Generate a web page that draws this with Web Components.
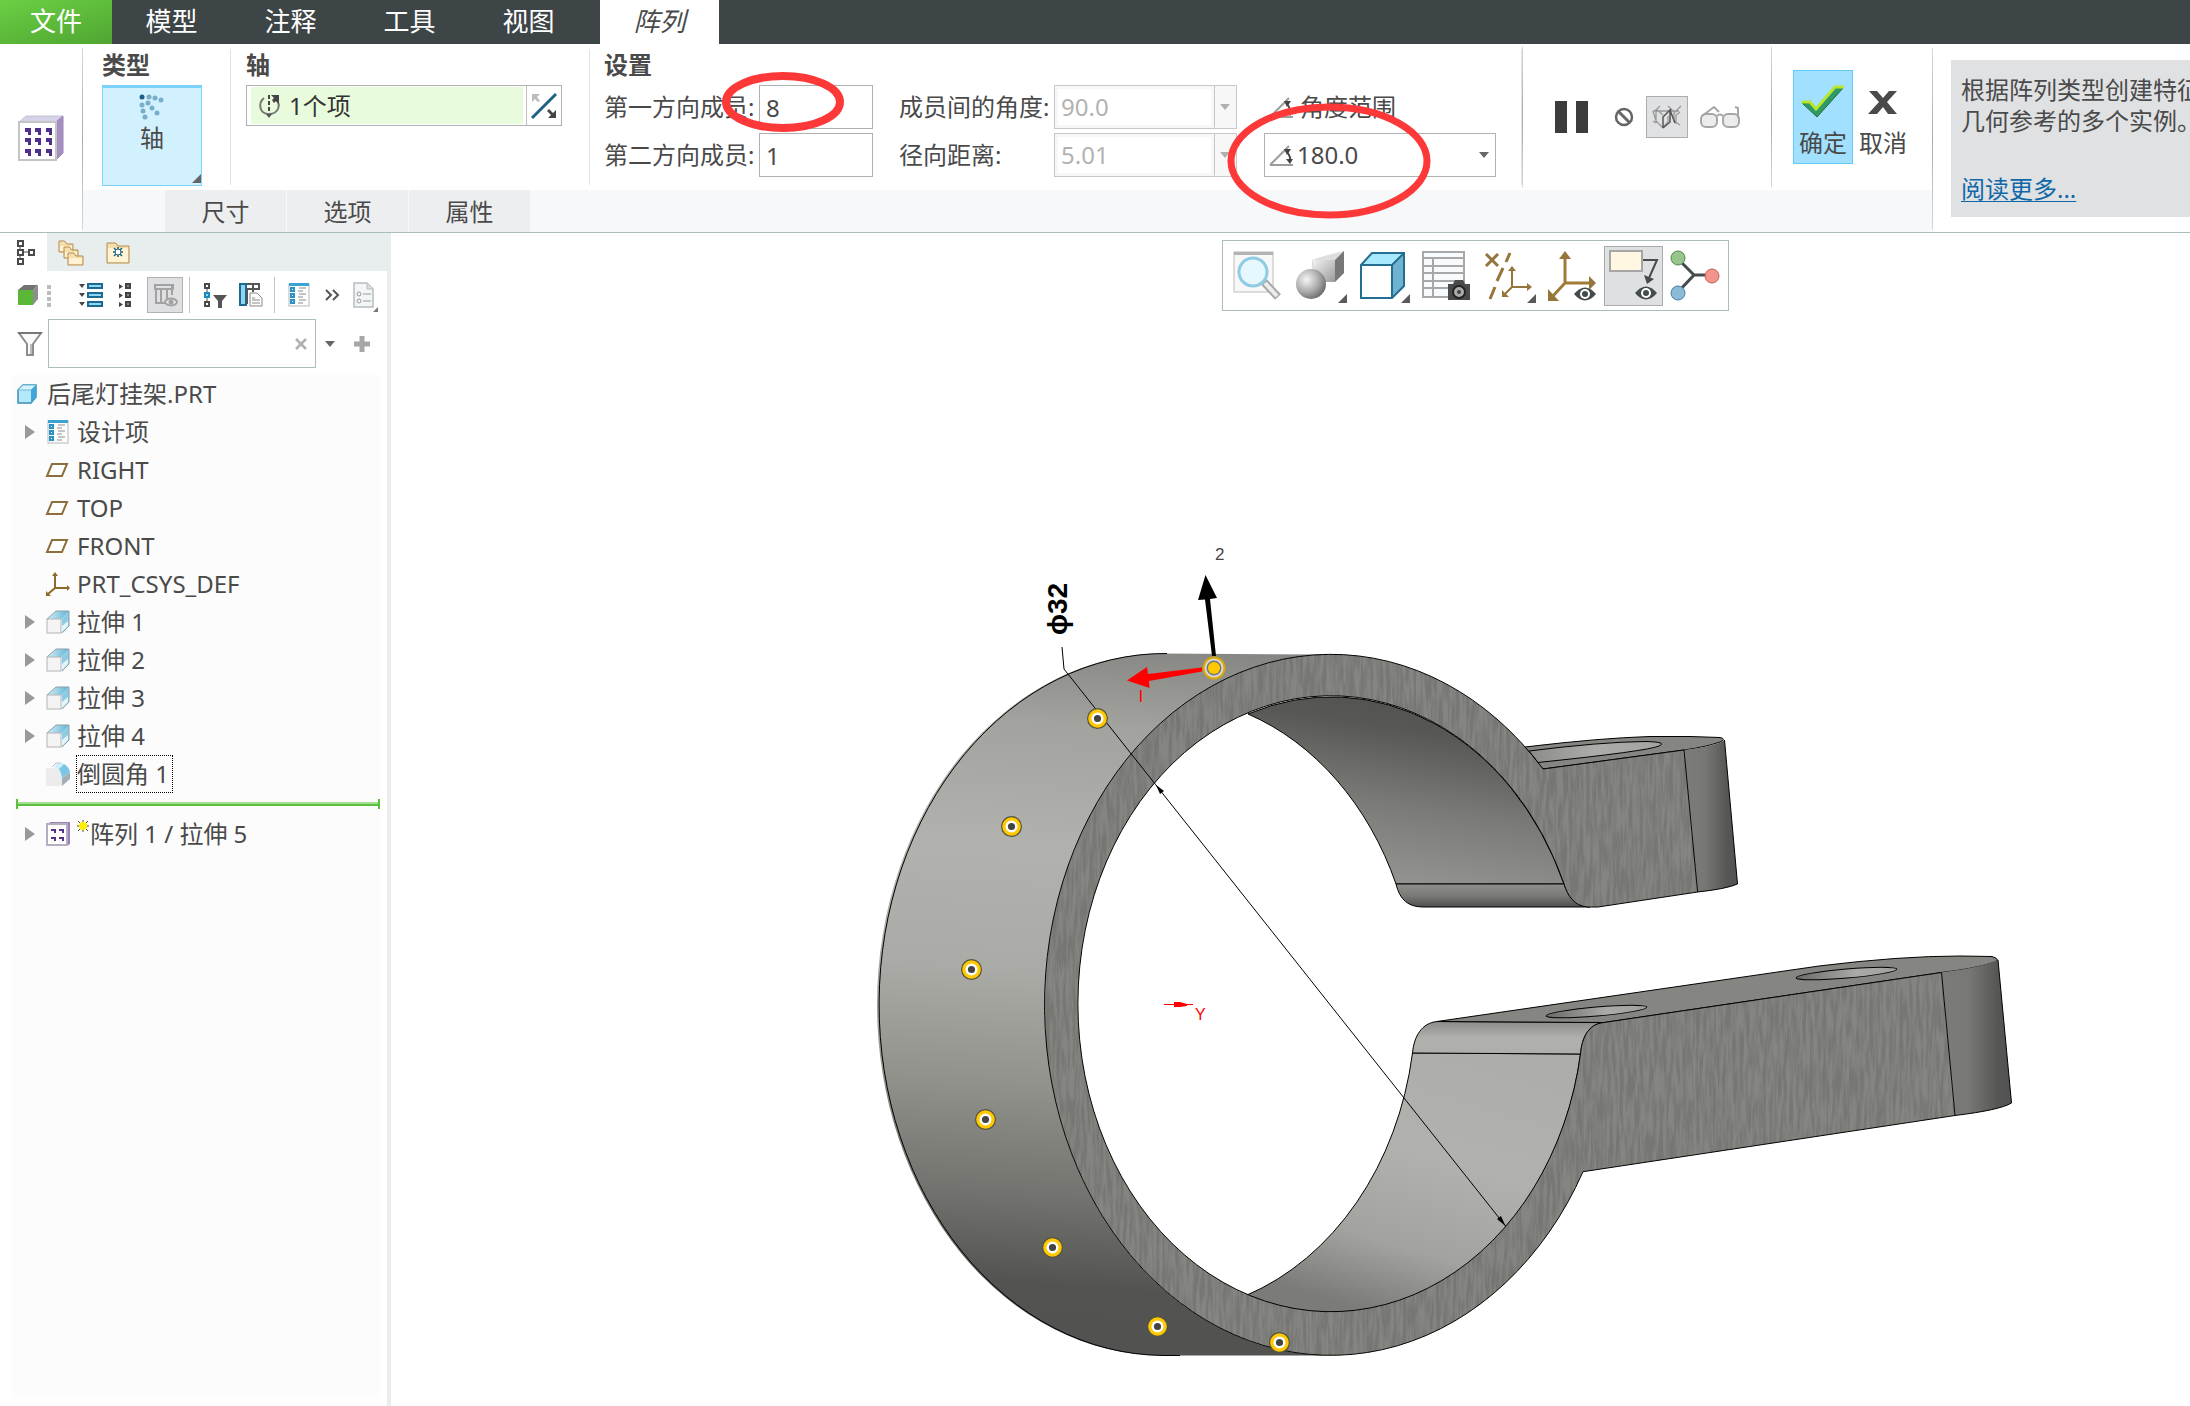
<!DOCTYPE html>
<html lang="zh-CN">
<head>
<meta charset="utf-8">
<meta name="viewport" content="width=device-width, initial-scale=1">
<title>后尾灯挂架.PRT</title>
<style>
  html, body { margin: 0; height: 100%; }
  body {
    font-family: "Noto Sans", "Noto Sans CJK SC", sans-serif;
    font-size: 24px; line-height: 36px; color: #4a4a4a; background: #fff;
  }
</style>
</head>
<body>
<cad-app></cad-app>
<script>
const BASE = `<style>
  *, *::before, *::after { box-sizing: border-box; }
  :host { display: block; }
  button, input, select { font: inherit; color: inherit; margin: 0; }
  button { background: none; border: 0; padding: 0; }
  svg { display: block; flex: none; }
</style>`;

function define(name, html, setup) {
  const tpl = document.createElement('template');
  tpl.innerHTML = BASE + html;
  customElements.define(name, class extends HTMLElement {
    constructor() { super(); this.attachShadow({ mode: 'open' }).append(tpl.content.cloneNode(true)); }
    connectedCallback() { if (setup) setup(this, this.shadowRoot); }
  });
}

/* Icon set: [width, height, markup] */
const cube = `<defs><linearGradient id="t" x2="1" y2="0"><stop offset="0" stop-color="#d5edf6"/><stop offset="1" stop-color="#5fb4d6"/></linearGradient></defs><path d="M1 9 10 1h13l-7 8z" fill="url(#t)"/><path d="M16 9l7-8v15l-7 7z" fill="#8ccbe4"/><path d="M16 22v-6l6-5v5z" fill="#e2f5fc"/><path d="M1 9 10 1h13v15l-7 7" fill="none" stroke="#8fa0a6"/><rect x="1" y="9" width="14" height="14" fill="#f4f4f4" stroke="#b4b4b4"/>`;
const sheet = `<rect x="2" y="1" width="20" height="22" fill="#fdfdfd" stroke="#b4b8ba"/><rect x="2" y="0" width="20" height="3" fill="#3aa3d2"/><g fill="#fff" stroke="#2a93c6" stroke-width="2"><rect x="4" y="5" width="3" height="3"/><rect x="4" y="11" width="3" height="3"/><rect x="4" y="17" width="3" height="3"/></g><path d="M12 5h7M11 8h5M12 11h7M11 14h5M12 17h7M11 20h5" stroke="#8c8c8c" fill="none"/>`;
const angle = `<path d="M1 22 20 3M1 22h23" stroke="#9c9c9c" stroke-width="2" fill="none"/><path d="M18 9q4 5 3 9" stroke="#444" stroke-width="2" fill="none"/><path d="M15 6l7 0-4 6zM17 16h7l-3 5z" fill="#444"/>`;
const corner = (x, y) => `<path d="M${x} ${y}v-9l-9 9z" fill="#5a5a5a"/>`;
const eye = (x, y) => `<g transform="translate(${x} ${y})"><path d="M-11 0Q0-13 11 0Q0 13-11 0Z" fill="#434b4c"/><circle r="5" fill="#fff"/><circle r="3" fill="#434b4c"/></g>`;
const folder = (x, y, w, h) => `<path d="M${x} ${y}h${w * .4}l2 3h${w * .6 - 2}v${h}h-${w}z" fill="#f6dfae" stroke="#b58d4c"/><path d="M${x + 1} ${y + 5}h${w - 2}v${h - 3}h-${w - 2}z" fill="#fff3d4"/>`;
const dotL = (x, y) => `M${x} ${y}h6v7h-3v-3h-3z`;
const ICONS = {
  pattern: [46, 46, `<path d="M1 7 8 1h37l-6 6z" fill="#d5d2ea" stroke="#c4c4cc"/><path d="M38 7l7-6v37l-7 7z" fill="#a68fc0" stroke="#9c86b8"/><rect x="1" y="7" width="37" height="38" fill="#fff" stroke="#c4c4c4" stroke-width="2"/><path d="${[13, 23, 34].map(y => [7, 17, 28].map(x => dotL(x, y)).join('')).join('')}" fill="#4f2f8c"/>`],
  axisdots: [26, 26, `<g fill="#78aec8"><circle cx="10" cy="3" r="2.5"/><circle cx="16" cy="4" r="2.5"/><circle cx="22" cy="6" r="2.5"/><circle cx="3" cy="11" r="2.5"/><circle cx="9" cy="9" r="2.5"/><circle cx="13" cy="14" r="2.5"/><circle cx="18" cy="19" r="2.5"/><circle cx="4" cy="17" r="2.5"/><circle cx="6" cy="23" r="2.5"/></g><circle cx="3" cy="3" r="2.5" fill="#1b5f88"/>`],
  rotate: [22, 24, `<path d="M5 4C-1 9 0 20 10 20C20 20 22 10 17 6" fill="none" stroke="#777" stroke-width="2"/><path d="M12 1h8v9l-3-3-2 2-2-3 2-2z" fill="#444"/><path d="M10 1v18" stroke="#444" stroke-width="2" stroke-dasharray="4 2"/><path d="M7 20h6l-3 4z" fill="#555"/>`],
  flip: [26, 26, `<path d="M1 25 25 1" stroke="#1f6285" stroke-width="3"/><path d="M1 1h8L6 4l3 4-2 1-3-3-3 3z" fill="#bcbcbc"/><path d="M25 25h-8l3-3-4-4 2-2 4 4 3-3z" fill="#444"/>`],
  angle: [26, 24, angle],
  caret: [10, 6, `<path d="M0 0h10L5 6z" fill="currentColor"/>`],
  pause: [34, 34, `<rect x="0" y="1" width="12" height="32" fill="#3c3c3c"/><rect x="21" y="1" width="12" height="32" fill="#3c3c3c"/>`],
  none: [20, 20, `<circle cx="10" cy="10" r="8" fill="none" stroke="#666" stroke-width="2.5"/><path d="M5 5 15 15" stroke="#666" stroke-width="3"/>`],
  wire: [30, 26, `<g fill="none" stroke="#999" stroke-width="1.3"><path d="M1 7h26M1 7 4 17 11 24M1 17 4 19M4 5v14M11 11 4 5M8 2 3 7M16 12v6l-6 6M22 9v8l6 4M28 8l-4 3v9M16 2l6 6M29 2 22 9"/></g><path d="M11 24V13L19 5M11 24l7-6V6l5 13" fill="none" stroke="#555" stroke-width="1.5"/>`],
  glasses: [40, 24, `<g fill="#ececec" stroke="#a6a6a6" stroke-width="2"><rect x="1" y="9" width="16" height="13" rx="5"/><rect x="23" y="9" width="16" height="13" rx="5"/></g><path d="M17 11q3-3 6 0M2 11 14 2l5 5M38 13V3l-3-1" fill="none" stroke="#a6a6a6" stroke-width="2"/>`],
  check: [44, 32, `<path d="M1 17h8l6 6L34 1h9L16 31z" fill="#2e9a66" stroke="#2b6a3e"/><path d="M1 16h8l6 7L34 1h9" fill="none" stroke="#b7e62a" stroke-width="3"/>`],
  cross: [30, 24, `<path d="M1 0h8l6 7 6-7h8L19 11l10 12h-9l-5-7-6 7H0L11 11z" fill="#4a4a4a"/>`],
  tree: [18, 26, `<g fill="none" stroke="#4a4a4a" stroke-width="2"><rect x="1" y="2" width="5" height="5"/><rect x="1" y="11" width="5" height="5"/><rect x="1" y="20" width="5" height="5"/><rect x="12" y="11" width="5" height="5"/><path d="M3 7v4M3 16v4M6 13h6" stroke-width="1"/></g>`],
  folders: [26, 26, folder(1, 2, 14, 8) + folder(6, 8, 14, 8) + folder(10, 14, 15, 9)],
  favfolder: [24, 24, folder(1, 3, 22, 17) + `<path d="M12 7v10M7 12h10M8 8l8 8M16 8l-8 8" stroke="#17617f" stroke-width="1.5"/><circle cx="12" cy="12" r="3" fill="#fff" stroke="#17617f"/>`],
  greencube: [20, 20, `<path d="M0 5 6 0h14l-5 5z" fill="#737373"/><path d="M15 5l5-5v14l-5 6z" fill="#8e8e8e"/><rect y="5" width="15" height="15" fill="#5ab738"/>`],
  dots: [4, 24, `<g fill="#bdbdbd"><rect y="2" width="4" height="4"/><rect y="8" width="4" height="4"/><rect y="14" width="4" height="4"/><rect y="20" width="4" height="4"/></g>`],
  expand: [24, 26, `<path d="M0 2h6L3 6zM0 11h6l-3 4zM0 20h6l-3 4z" fill="#444"/><g fill="#8fd6f4" stroke="#1b6a90" stroke-width="2"><rect x="9" y="2" width="14" height="4"/><rect x="9" y="11" width="14" height="4"/><rect x="9" y="20" width="14" height="4"/></g>`],
  collapse: [24, 26, `<path d="M6 2v5l4-2.500zM6 11v5l4-2.500zM6 20v5l4-2.500z" fill="#444"/><g fill="#888" stroke="#444" stroke-width="2"><rect x="13" y="2" width="4" height="4"/><rect x="13" y="11" width="4" height="4"/><rect x="13" y="20" width="4" height="4"/></g>`],
  coleye: [24, 26, `<g fill="none" stroke="#a2a2a2" stroke-width="2"><path d="M2 3h18v4H2zM3 7v14h5V7M8 7v14h6V7M14 7v6M19 3v10"/></g><ellipse cx="18" cy="20" rx="6" ry="3.500" fill="#e6e6e6" stroke="#a2a2a2" stroke-width="2"/><circle cx="18" cy="20" r="2.500" fill="#a2a2a2"/>`],
  treefilter: [24, 26, `<g fill="#fff" stroke="#4a4a4a" stroke-width="2"><rect x="2" y="2" width="4" height="4"/><rect x="2" y="20" width="4" height="4"/></g><rect x="2" y="11" width="4" height="4" fill="#8fd6f4" stroke="#1b8abf" stroke-width="2"/><path d="M4 6v4M4 16v4" stroke="#4a4a4a"/><path d="M10 13h14l-5 6v7h-4v-7z" fill="#555"/>`],
  colsheet: [24, 26, `<rect x="1" y="2" width="6" height="21" fill="#8fd6f4" stroke="#1b6a90" stroke-width="2"/><path d="M8 2h12v5H8M8 7v15M14 2v8" fill="none" stroke="#555" stroke-width="2"/><path d="M11 11h7l5 5v8H11z" fill="#fff" stroke="#888"/><path d="M13 16h3M13 18h8M13 21h8" stroke="#888"/>`],
  sheet: [24, 24, sheet],
  chevrons: [14, 12, `<path d="M1 1l5 5-5 5M8 1l5 5-5 5" fill="none" stroke="#555" stroke-width="2"/>`],
  doc: [24, 30, `<path d="M1 3h13l6 6v18H1z" fill="#f3f6f7" stroke="#b8bcbe" stroke-width="1.5"/><path d="M14 3v6h6" fill="#ddd" stroke="#b8bcbe"/><g fill="none" stroke="#999"><circle cx="6" cy="14" r="2"/><circle cx="6" cy="21" r="2"/><path d="M10 14h8M10 21h8"/></g><path d="M25 32v-5l-5 5z" fill="#777"/>`],
  funnel: [24, 24, `<path d="M1 1h22l-8 11v11H9V12z" fill="#fafafa" stroke="#8d8d8d" stroke-width="2"/><path d="M13 12v10" stroke="#bbb" stroke-width="2"/><path d="M0 1h24" stroke="#777" stroke-width="2"/>`],
  clear: [12, 12, `<path d="M1 1l10 10M11 1 1 11" stroke="#b0b0b0" stroke-width="2.500"/>`],
  plus: [18, 18, `<path d="M9 1v16M1 9h16" stroke="#a6a6a6" stroke-width="5"/>`],
  part: [20, 20, `<path d="M1 6 6 1h13v12l-5 6H1z" fill="#b4e8fb" stroke="#3a8db3" stroke-width="1.5"/><path d="M14 6l5-5v12l-5 6z" fill="#3fa7da"/><path d="M1 6 6 1h13l-5 5z" fill="#d6f3fd" stroke="#6bb5d3"/>`],
  arrow: [10, 14, `<path d="M0 0 10 7 0 14z" fill="#999"/>`],
  plane: [24, 24, `<path d="M6 6h15l-5 12H1z" fill="#fff" stroke="#8c6f3c" stroke-width="2"/>`],
  csys: [24, 24, `<path d="M9 16V3M9 16h13M9 16l-7 6" fill="none" stroke="#8c6b2a" stroke-width="2"/><path d="M6 4h6L9 0zM21 13v6l3-3zM0 19v5h5z" fill="#8c6b2a"/>`],
  extrude: [24, 24, cube],
  round: [24, 24, `<path d="M0 6h9q7 2 7 10v8H0z" fill="#ececec"/><path d="M16 16l8-6v7l-8 7z" fill="#a4b0b5"/><path d="M8 5 13 0q9 2 11 10l-8 6Q15 8 8 5z" fill="#cdeefb"/><path d="M13 7l5-5q5 3 6 8l-8 6q0-5-3-9z" fill="#7cc6e4"/><path d="M6 5l4-4h4" stroke="#b9c2c5" fill="none"/>`],
  patternsmall: [24, 24, `<path d="M2 2 4 0h20v22l-3 2z" fill="#9a82b8"/><rect x="1" y="2" width="20" height="21" fill="#fff" stroke="#b5aec0" stroke-width="2"/><path d="M5 7h5v4H8V9H5zM13 7h5v4h-2V9h-3zM5 15h5v4H8v-2H5zM13 15h5v4h-2v-2h-3z" fill="#53318c"/>`],
  star: [12, 12, `<path d="M1 1l10 10M11 1 1 11M6 0v12M0 6h12" stroke="#55552a"/><circle cx="6" cy="6" r="4" fill="#ffee00"/>`],
  refit: [48, 50, `<rect x="1" y="1" width="39" height="40" fill="#f8f8f8" stroke="#bcbcbc"/><rect x="1" y="1" width="39" height="3" fill="#b4b4b4"/><path d="M31 31l14 15" stroke="#a9a9a9" stroke-width="8"/><path d="M32 32l12 13" stroke="#eee" stroke-width="4"/><circle cx="20" cy="21" r="14" fill="#e6f8fe" stroke="#90cbe4" stroke-width="3"/>`],
  shade: [48, 50, `<defs><radialGradient id="g" cx=".35" cy=".35" r=".7"><stop offset="0" stop-color="#f6f6f6"/><stop offset=".6" stop-color="#aaa"/><stop offset="1" stop-color="#6b6b6b"/></radialGradient><linearGradient id="f" x2="1" y2="1"><stop offset="0" stop-color="#f2f2f2"/><stop offset="1" stop-color="#9a9a9a"/></linearGradient></defs><path d="M16 9 28 5 48 0v22l-9 9H16z" fill="#dedede"/><path d="M17 9h22v22H17z" fill="url(#f)"/><path d="M39 9 48 0v22l-9 9z" fill="#777"/><circle cx="15" cy="33" r="15" fill="url(#g)"/>` + corner(51, 52)],
  display: [48, 50, `<path d="M2 14 13 2h32L33 14z" fill="#a9e9fd"/><path d="M33 14 45 2v33L33 47z" fill="#6fb3d1"/><path d="M2 14h31v33H2z" fill="#fff"/><path d="M2 14 13 2h32v33L33 47H2zM2 14h31v33M33 14 45 2" fill="none" stroke="#246f91" stroke-width="2"/>` + corner(51, 52)],
  views: [48, 50, `<rect x="1" y="1" width="41" height="45" fill="#f7fbfd" stroke="#a8a8a8" stroke-width="2"/><path d="M1 7h41M1 15h41M1 22h41M1 30h41M1 37h41M11 7v39" stroke="#a8a8a8" stroke-width="2"/><path d="M26 33h5l2-4h8l2 4h5v16H26z" fill="#4a4a4a"/><circle cx="37" cy="41" r="6" fill="#aaa" stroke="#222" stroke-width="2"/><circle cx="37" cy="41" r="2" fill="#444"/>`],
  datum: [48, 50, `<g fill="none" stroke="#94763c" stroke-width="3"><path d="M1 3l12 12M13 3 1 15M25 2l-4 9M18 17l-6 13M10 36 5 48"/><path d="M27 36V19M27 36h18M27 36l-8 8" stroke-width="2"/></g><path d="M23 20h8l-4-5zM42 32v8l5-4zM17 39v7h7z" fill="#94763c"/>` + corner(51, 52)],
  csyseye: [48, 50, `<path d="M17 32V6M17 32h26M17 32 4 46" stroke="#a07b35" stroke-width="3" fill="none"/><path d="M11 8h12l-6-8zM41 25v14l7-7zM0 38v12h11z" fill="#94763c"/>` + eye(37, 43)],
  note: [48, 52, `<rect x="0" y="1" width="32" height="20" fill="#fff7e2" stroke="#a6a6a6" stroke-width="2"/><path d="M33 10h14l-8 18" fill="none" stroke="#4a4a4a" stroke-width="2"/><path d="M34 25l10 4-7 5z" fill="#4a4a4a"/>` + eye(36, 43)],
  spin: [48, 50, `<path d="M7 8 23 24 7 41M23 24h18" fill="none" stroke="#434b4c" stroke-width="3"/><circle cx="7" cy="7" r="7" fill="#97c58b" stroke="#4f8a4d"/><circle cx="7" cy="42" r="7" fill="#8bbbd8" stroke="#477f9d"/><circle cx="41" cy="25" r="7" fill="#f2948c" stroke="#c1605a"/>`]
};
customElements.define('cad-icon', class extends HTMLElement {
  constructor() { super(); this.attachShadow({ mode: 'open' }); }
  connectedCallback() {
    const [w, h, body] = ICONS[this.getAttribute('name')];
    this.shadowRoot.innerHTML = `<style>:host{display:block;flex:none}svg{display:block;overflow:visible}</style>
      <svg width="${w}" height="${h}" viewBox="0 0 ${w} ${h}" aria-hidden="true">${body}</svg>`;
  }
});

define('cad-menu', `<style>
  nav { display: flex; height: 44px; background: #3d4547; }
  button { width: 119px; padding-bottom: 2px; font-size: 26px; line-height: 40px; color: #fff; text-align: center; }
  .file { width: 112px; background: linear-gradient(165deg, #6bcf43, #4fa632); }
  .active { margin-left: 12px; background: #fff; color: #4a4a4a; font-style: italic; }
</style>
<nav><button class="file">文件</button><button>模型</button><button>注释</button><button>工具</button><button>视图</button><button class="active">阵列</button></nav>`);

define('ribbon-group', `<style>
  :host { padding: 3px var(--pr, 0) 0 var(--pl, 0); border-right: 1px solid transparent; border-image: linear-gradient(#fff 4%, #e2e4e4 4%, #e2e4e4 96%, #fff 96%) 1; }
  h2 { margin: 0 0 2px; font-size: 24px; line-height: 36px; font-weight: 700; }
</style><h2></h2><slot></slot>`, (el, root) => { root.querySelector('h2').textContent = el.getAttribute('heading'); });

/* Drop-down whose caret sits over the native select */
define('value-combo', `<style>
  :host { display: grid; grid-template-columns: minmax(0, 1fr) 22px; height: 44px; border: 1px solid #b0b0b0; background: #fff; }
  select { grid-area: 1 / 1 / 2 / 3; appearance: none; border: 0; background: none; padding: 0 6px; width: 100%; height: 42px; opacity: 1; }
  cad-icon { grid-area: 1 / 2; place-self: center; pointer-events: none; color: #666; }
  :host([icon]) select { padding-left: 32px; }
  .lead { display: none; grid-area: 1 / 1; justify-self: start; align-self: center; padding-left: 4px; }
  :host([icon]) .lead { display: block; }
  :host([off]) { background: #f7f7f7; border-color: #c8c8c8; }
  :host([off]) select { color: #b2b2b2; }
  :host([off]) .pane { grid-area: 1 / 1; margin: 3px; background: #fff; }
  :host([off]) cad-icon { color: #b0b0b0; }
  :host([off]) .rule { grid-area: 1 / 2; border-left: 1px solid #c8c8c8; }
</style><span class="pane"></span><span class="rule"></span><select><option></option></select><cad-icon class="lead" name="angle"></cad-icon><cad-icon name="caret"></cad-icon>`,
(el, root) => {
  const s = root.querySelector('select');
  s.options[0].textContent = el.getAttribute('value');
  s.setAttribute('aria-label', el.getAttribute('label'));
  s.disabled = el.hasAttribute('off');
});

define('cad-ribbon', `<style>
  :host { display: flex; height: 189px; border-bottom: 1px solid #abbcbc; background: #fff; overflow: hidden; }
  .home { flex: none; width: 83px; display: grid; place-items: center; }
  .home, .main { border-right: 1px solid; border-image: linear-gradient(#fff 2%, #d4d9d9 3%, #9fafaf 50%, #d4d9d9 98%, #fff 99%) 1; }
  .main { flex: none; display: flex; flex-direction: column; }
  .groups { display: flex; height: 146px; }
  .g1 { --pl: 19px; --pr: 28px; } .g2 { --pl: 15px; --pr: 27px; } .g3 { --pl: 14px; --pr: 25px; }
  .type { display: flex; flex-direction: column; align-items: center; position: relative; width: 100px; height: 101px; padding-top: 6px; background: #d2f1ff; border: 1px solid #7dd2fb; border-top-width: 3px; }
  .type svg { position: absolute; right: 0; bottom: 2px; }
  .collector { display: flex; width: 316px; height: 41px; border: 1px solid #b0b0b0; }
  .items { flex: 1; display: flex; align-items: center; gap: 8px; margin: 1px 3px 1px 4px; padding-left: 8px; background: #e9fbdd; color: #333; text-align: left; }
  .flip { width: 35px; display: grid; place-items: center; border-left: 1px solid #c0c0c0; }
  .grid { display: grid; grid-template-columns: 155px 140px 155px 210px 232px; grid-template-rows: 44px 44px; row-gap: 4px; align-items: center; }
  .num { position: relative; width: 114px; height: 44px; }
  .num input { width: 100%; height: 100%; border: 1px solid #b0b0b0; padding: 0 6px; background: #fff; outline: 0; }
  .grid value-combo { width: 183px; }
  .grid .range { position: relative; }
  .grid .range value-combo { width: 232px; }
  .check { display: flex; align-items: center; gap: 5px; padding-left: 5px; }
  .ink { position: absolute; pointer-events: none; overflow: visible; z-index: 2; }
  .num .ink { left: -37px; top: -13px; }
  .range .ink { left: -37px; top: -30px; }
  .tools, .end { display: flex; align-items: center; }
  .tools { gap: 12px; padding: 0 31px 0 32px; border-right: 1px solid; border-left: 1px solid; border-image: linear-gradient(#fff 2%, #d4d9d9 3%, #aaa 50%, #d4d9d9 97%, #fff 98%) 1; }
  .tools .first { margin-right: 13px; }
  .tog { width: 42px; height: 42px; display: grid; place-items: center; background: #e0e1e3; border: 1px solid #abadaf; }
  .end { padding: 0 19px 0 21px; }
  .end button { width: 60px; height: 94px; display: flex; flex-direction: column; align-items: center; justify-content: space-between; padding: 15px 0 2px; border: 1px solid transparent; }
  .end .ok { background: #a1e0ff; border-color: #63caf8; }
  .end .no { padding-top: 20px; }
  .tabs { display: flex; gap: 1px; height: 42px; padding-left: 82px; background: #f7f8fa; }
  .tabs button { width: 121px; background: #edeef0; line-height: 42px; padding-top: 1px; }
  .info { flex: 1; min-width: 0; height: 157px; margin: 16px 0 0 18px; padding: 14px 0 0 10px; background: #e0e1e3; line-height: 31px; white-space: nowrap; overflow: hidden; }
  .info p { margin: 0 0 37px; }
  a { color: #1068a8; text-decoration: underline; text-decoration-thickness: 1px; text-underline-offset: 3px; }
</style>
<div class="home"><cad-icon name="pattern"></cad-icon></div>
<div class="main">
  <div class="groups">
    <ribbon-group class="g1" heading="类型"><button class="type"><cad-icon name="axisdots"></cad-icon>轴<svg width="9" height="9"><path d="M9 0v9H0z" fill="#666"/></svg></button></ribbon-group>
    <ribbon-group class="g2" heading="轴"><div class="collector"><button class="items"><cad-icon name="rotate"></cad-icon>1个项</button><button class="flip" aria-label="反向"><cad-icon name="flip"></cad-icon></button></div></ribbon-group>
    <ribbon-group class="g3" heading="设置"><div class="grid">
      <label for="n1">第一方向成员:</label>
      <div class="num"><input id="n1" value="8"><svg class="ink" width="122" height="60"><ellipse cx="61" cy="30" rx="57" ry="26" fill="none" stroke="#fc3838" stroke-width="8"/></svg></div>
      <span>成员间的角度:</span><value-combo off value="90.0" label="成员间的角度"></value-combo>
      <div class="check"><cad-icon name="angle"></cad-icon>角度范围</div>
      <label for="n2">第二方向成员:</label>
      <div class="num"><input id="n2" value="1"></div>
      <span>径向距离:</span><value-combo off value="5.01" label="径向距离"></value-combo>
      <div class="range"><value-combo icon value="180.0" label="角度范围"></value-combo><svg class="ink" width="204" height="116"><ellipse cx="102" cy="58" rx="98" ry="54" fill="none" stroke="#fc3838" stroke-width="7"/></svg></div>
    </div></ribbon-group>
    <div class="tools"><button class="first" aria-label="暂停"><cad-icon name="pause"></cad-icon></button><button aria-label="无预览"><cad-icon name="none"></cad-icon></button><button class="tog" aria-label="分离预览"><cad-icon name="wire"></cad-icon></button><button aria-label="预览"><cad-icon name="glasses"></cad-icon></button></div>
    <div class="end"><button class="ok"><cad-icon name="check"></cad-icon>确定</button><button class="no"><cad-icon name="cross"></cad-icon>取消</button></div>
  </div>
  <div class="tabs"><button>尺寸</button><button>选项</button><button>属性</button></div>
</div>
<div class="info"><p>根据阵列类型创建特征<br>几何参考的多个实例。</p><a href="#">阅读更多...</a></div>`);

define('tree-row', `<style>
  :host { display: flex; align-items: center; gap: 7px; height: 38px; padding-left: 13px; white-space: nowrap; }
  .tw { width: 10px; margin-right: 4px; }
  :host([root]) { padding-left: 5px; gap: 10px; }
  :host([root]) .tw { display: none; }
  :host([focused]) .t { outline: 1px dotted #000; padding-right: 3px; }
  .star { display: none; height: 28px; }
  :host([fresh]) .star { display: block; }
  .lab { display: flex; align-items: center; gap: 1px; }
</style><span class="tw"></span><span class="ic"></span><span class="lab"><cad-icon class="star" name="star"></cad-icon><span class="t"><slot></slot></span></span>`,
(el, root) => {
  root.querySelector('.ic').innerHTML = `<cad-icon name="${el.getAttribute('icon')}"></cad-icon>`;
  if (el.hasAttribute('open')) root.querySelector('.tw').innerHTML = '<cad-icon name="arrow"></cad-icon>';
  el.setAttribute('role', 'treeitem');
});

define('model-panel', `<style>
  :host { flex: none; width: 391px; border-right: 4px solid #e8eded; background: #fff; }
  .tabs { display: flex; height: 38px; background: #e8eded; margin-right: -4px; }
  .tabs button { width: 47px; display: grid; place-items: center; }
  .tabs .on { background: #fff; padding-left: 4px; }
  .bar { display: flex; align-items: center; height: 48px; padding-left: 18px; }
  .set { display: flex; align-items: center; gap: 9px; }
  .set + .set { margin-left: 28px; gap: 10px; }
  .sep { width: 1px; height: 36px; background: #bfc4c4; margin: 0 13px 0 6px; }
  .set.mid { margin: 0; gap: 12px; }
  .mid + .sep { margin: 0 12px 0 11px; }
  .set.last { margin: 0; gap: 14px; }
  .tog { width: 36px; height: 36px; display: grid; place-items: center; background: #dfe0e2; border: 1px solid #b0b2b4; }
  .find { display: flex; align-items: center; height: 49px; padding-left: 18px; gap: 6px; }
  .box { display: flex; align-items: center; width: 268px; height: 49px; border: 1px solid #abbcbc; padding-right: 8px; }
  .box input { flex: 1; min-width: 0; height: 100%; border: 0; outline: 0; background: none; padding: 0 8px; }
  .more { display: flex; align-items: center; gap: 18px; padding-left: 3px; color: #666; }
  .list { margin: 7px 7px 0 12px; background: #fcfcfc; min-height: 1024px; }
  .insert { display: flex; align-items: center; height: 22px; padding-left: 4px; }
  .insert i { flex: 1; height: 4px; background: linear-gradient(#a3dc92 50%, #5bbf3e 50%); }
  .insert::before, .insert::after { content: ""; width: 2px; height: 10px; background: #5bbf3e; }
</style>
<div class="tabs"><button class="on" aria-label="模型树"><cad-icon name="tree"></cad-icon></button><button aria-label="文件夹"><cad-icon name="folders"></cad-icon></button><button aria-label="收藏夹"><cad-icon name="favfolder"></cad-icon></button></div>
<div class="bar">
  <div class="set"><button aria-label="显示"><cad-icon name="greencube"></cad-icon></button><cad-icon name="dots"></cad-icon></div>
  <div class="set"><button aria-label="全部展开"><cad-icon name="expand"></cad-icon></button><button aria-label="全部折叠"><cad-icon name="collapse"></cad-icon></button><button class="tog" aria-label="显示列"><cad-icon name="coleye"></cad-icon></button></div>
  <span class="sep"></span>
  <div class="set mid"><button aria-label="树过滤器"><cad-icon name="treefilter"></cad-icon></button><button aria-label="树列"><cad-icon name="colsheet"></cad-icon></button></div>
  <span class="sep"></span>
  <div class="set last"><button aria-label="设计项"><cad-icon name="sheet"></cad-icon></button><button aria-label="更多"><cad-icon name="chevrons"></cad-icon></button><button aria-label="设置"><cad-icon name="doc"></cad-icon></button></div>
</div>
<div class="find"><cad-icon name="funnel"></cad-icon><div class="box"><input aria-label="过滤"><button aria-label="清除"><cad-icon name="clear"></cad-icon></button></div><div class="more"><button aria-label="选项"><cad-icon name="caret"></cad-icon></button><button aria-label="添加"><cad-icon name="plus"></cad-icon></button></div></div>
<div class="list" role="tree">
  <tree-row root icon="part">后尾灯挂架.PRT</tree-row>
  <tree-row open icon="sheet">设计项</tree-row>
  <tree-row icon="plane">RIGHT</tree-row>
  <tree-row icon="plane">TOP</tree-row>
  <tree-row icon="plane">FRONT</tree-row>
  <tree-row icon="csys">PRT_CSYS_DEF</tree-row>
  <tree-row open icon="extrude">拉伸 1</tree-row>
  <tree-row open icon="extrude">拉伸 2</tree-row>
  <tree-row open icon="extrude">拉伸 3</tree-row>
  <tree-row open icon="extrude">拉伸 4</tree-row>
  <tree-row focused icon="round">倒圆角 1</tree-row>
  <div class="insert"><i></i></div>
  <tree-row open fresh icon="patternsmall">阵列 1 / 拉伸 5</tree-row>
</div>`);

define('view-toolbar', `<style>
  :host { display: flex; align-items: center; gap: 8px; height: 71px; padding: 0 9px 0 10px; background: #fff; border: 1px solid #abbcbc; }
  .set { display: flex; gap: 15px; }
  .tog { width: 59px; height: 60px; display: grid; place-items: center; background: #dfe0e2; border: 1px solid #a9acae; }
</style>
<div class="set"><button aria-label="重新调整"><cad-icon name="refit"></cad-icon></button><button aria-label="渲染"><cad-icon name="shade"></cad-icon></button><button aria-label="显示样式"><cad-icon name="display"></cad-icon></button><button aria-label="已保存方向"><cad-icon name="views"></cad-icon></button><button aria-label="基准显示"><cad-icon name="datum"></cad-icon></button><button aria-label="坐标系显示"><cad-icon name="csyseye"></cad-icon></button></div>
<button class="tog" aria-label="注释显示"><cad-icon name="note"></cad-icon></button><button aria-label="旋转中心"><cad-icon name="spin"></cad-icon></button>`);

const pins = [[1097.5, 718.5], [1011.5, 826.5], [971.5, 969.5], [985.5, 1119.5], [1052.5, 1247.5], [1157.5, 1326.5], [1279.5, 1342.5]]
  .map(([x, y]) => `<g transform="translate(${x} ${y})"><circle r="10.500" fill="#55563f"/><circle r="9.300" fill="#ffc800"/><circle r="6" fill="#fff"/><circle r="3.600" fill="#444"/></g>`).join('');
const FACE = 'M1543 769 L1684 750 L1697.6 892 L1598 907 H1588 C1574 906 1568 896 1564 884 A253 308 0 1 0 1580.5 1054 C1582 1038 1588 1024 1604 1022.5 L1941.5 972.5 L1955 1115.5 L1583 1171.7 A286.5 350.5 0 1 1 1543 769Z';
define('model-canvas', `<style>
  :host { position: relative; flex: 1; min-width: 0; background: #fff; }
  svg { width: 100%; height: 100%; }
  view-toolbar { position: absolute; left: 831px; top: 7px; }
  .e { fill: none; stroke: #000; stroke-width: 1; }
  text { font-family: "Liberation Sans", sans-serif; }
</style>
<svg viewBox="391 233 1799 1173" role="img" aria-label="后尾灯挂架">
  <defs>
    <linearGradient id="out" gradientUnits="userSpaceOnUse" x1="1060" y1="640" x2="1010" y2="1330"><stop offset="0" stop-color="#868782"/><stop offset=".12" stop-color="#a2a39e"/><stop offset=".3" stop-color="#b1b2ad"/><stop offset=".48" stop-color="#aaaba6"/><stop offset=".65" stop-color="#90918b"/><stop offset=".8" stop-color="#73736f"/><stop offset=".93" stop-color="#535351"/><stop offset="1" stop-color="#525250"/></linearGradient>
    <linearGradient id="inU" gradientUnits="userSpaceOnUse" x1="1440" y1="697" x2="1410" y2="884"><stop offset="0" stop-color="#525250"/><stop offset=".2" stop-color="#575755"/><stop offset=".6" stop-color="#7a7b76"/><stop offset="1" stop-color="#93948f"/></linearGradient>
    <linearGradient id="filU" x2="0" y2="1"><stop offset="0" stop-color="#8f908b"/><stop offset=".5" stop-color="#7a7b77"/><stop offset="1" stop-color="#4f4f4d"/></linearGradient>
    <linearGradient id="inL" gradientUnits="userSpaceOnUse" x1="1480" y1="1054" x2="1400" y2="1320"><stop offset="0" stop-color="#adaea9"/><stop offset=".4" stop-color="#b1b2ad"/><stop offset=".75" stop-color="#a2a39e"/><stop offset="1" stop-color="#7b7c77"/></linearGradient>
    <linearGradient id="filL" x2="0" y2="1"><stop offset="0" stop-color="#8c8d88"/><stop offset=".5" stop-color="#b0b1ac"/><stop offset="1" stop-color="#aeafaa"/></linearGradient>
    <linearGradient id="end"><stop offset="0" stop-color="#7c7d78"/><stop offset=".4" stop-color="#777874"/><stop offset=".8" stop-color="#565654"/><stop offset="1" stop-color="#525250"/></linearGradient>
    <linearGradient id="hole"><stop offset="0" stop-color="#6a6b67"/><stop offset=".6" stop-color="#aaaba6"/><stop offset="1" stop-color="#9fa09b"/></linearGradient>
    <linearGradient id="holeU"><stop offset="0" stop-color="#8b8c87"/><stop offset=".5" stop-color="#acada8"/><stop offset="1" stop-color="#a3a49f"/></linearGradient>
    <filter id="grain" x="0" y="0" width="1" height="1" color-interpolation-filters="sRGB"><feTurbulence type="fractalNoise" baseFrequency="0.3 0.03" numOctaves="3" seed="4"/><feColorMatrix values="3 0 0 0 -1  3 0 0 0 -1  3 0 0 0 -1  0 0 0 0 .06"/><feComposite in2="SourceAlpha" operator="in"/></filter>
  </defs>
  <path d="M1163 653.500 A286 351 0 0 0 1163 1355.500 H1331 A286.500 350.500 0 0 1 1331 654.500Z" fill="url(#out)"/>
  <path class="e" d="M1167 653.500 A286 351 0 0 0 1163 1355.500H1180"/>
  <path class="e" d="M1248 714 A253 308 0 0 1 1396 884 H1564 A253 308 0 0 0 1248 714Z" style="fill:url(#inU)"/>
  <path class="e" d="M1396 884 C1400 900 1408 907 1424 907 H1590 C1574 906 1568 896 1564 884Z" style="fill:url(#filU)"/>
  <path class="e" d="M1412.500 1053 A253 308 0 0 1 1246 1295.500 A253 308 0 0 0 1580.500 1054Z" style="fill:url(#inL)"/>
  <path class="e" d="M1412.500 1053 C1414 1036 1422 1023 1437 1021.500 L1604 1022.500 C1588 1024 1582 1038 1580.500 1054Z" style="fill:url(#filL)"/>
  <path class="e" d="M1525 747 Q1600 738 1650 736.500 L1690 736.500 L1720 737.500 Q1727 739 1720 742 Q1706 747 1684 750 L1543 769Z" style="fill:#858681"/>
  <path class="e" d="M1529 751 Q1600 742 1645 741.500 Q1668 742 1659 746 Q1648 751 1538 762.500Z" style="fill:url(#holeU)"/>
  <path d="M1684 750 Q1716 746 1724.500 740 L1737.500 884 Q1726 889 1697.600 892Z" fill="url(#end)"/>
  <path class="e" d="M1724.500 740 1737.500 884 Q1726 889 1697.600 892"/>
  <path class="e" d="M1437 1021.500 L1819 966 Q1900 956 1960 956 L1992 956.500 Q2003 960 1992 963 Q1972 969 1941.500 972.500 L1604 1022.500Z" style="fill:#858681"/>
  <g class="e"><ellipse cx="1596.500" cy="1011.500" rx="50.500" ry="4.600" transform="rotate(-5 1596.500 1011.500)" style="fill:url(#hole)"/><ellipse cx="1846.500" cy="973.500" rx="50.500" ry="4.600" transform="rotate(-5 1846.500 973.500)" style="fill:url(#hole)"/></g>
  <path d="M1941.500 972.500 Q1982 967 1998 960 L2011.500 1103 Q2000 1110 1955 1115.500Z" fill="url(#end)"/>
  <path class="e" d="M1998 960 2011.500 1103 Q2000 1110 1955 1115.500"/>
  <path class="e" d="${FACE}" style="fill:#7e7f7a"/>
  <path d="${FACE}" filter="url(#grain)"/>
  <path d="M1062 647 1064 669 1155.500 784.500 1505.500 1226" fill="none" stroke="#000"/>
  <path d="M1156 785 1164 791 1160 794ZM1505.500 1226 1497 1219 1501 1216Z"/>
  <text transform="translate(1067 635) rotate(-90)" font-size="28" font-weight="700" fill="#000">ϕ32</text>
  <path d="M1205.500 575 1217 598 1210 599 1216 656H1212L1205 599.500 1198 600Z"/>
  <text x="1215" y="560" font-size="17" fill="#444">2</text>
  <path d="M1127 680.500 1147 667 1148 674 1202 667.500V671.500L1149 681 1149.500 688Z" fill="#f00"/>
  <text x="1139" y="702" font-size="17" fill="#f00">l</text>
  <path d="M1164 1004.500H1193" stroke="#f00"/><path d="M1174 1002h6l7 2v2l-7 1h-6z" fill="#f00"/>
  <text x="1195" y="1020" font-size="16" fill="#f00">Y</text>
  <circle cx="1214" cy="668" r="11.500" fill="#d8a800"/><circle cx="1214" cy="668" r="8.500" fill="#777" stroke="#d8d8d8" stroke-width="2"/><circle cx="1214" cy="668" r="6" fill="#ffc800"/>
  ${pins}
</svg>
<view-toolbar></view-toolbar>`);

define('cad-app', `<style>
  :host { display: flex; flex-direction: column; min-height: 100vh; overflow: hidden; }
  main { flex: 1; display: flex; min-height: 0; }
</style><cad-menu></cad-menu><cad-ribbon></cad-ribbon><main><model-panel></model-panel><model-canvas></model-canvas></main>`);
</script>
</body>
</html>
